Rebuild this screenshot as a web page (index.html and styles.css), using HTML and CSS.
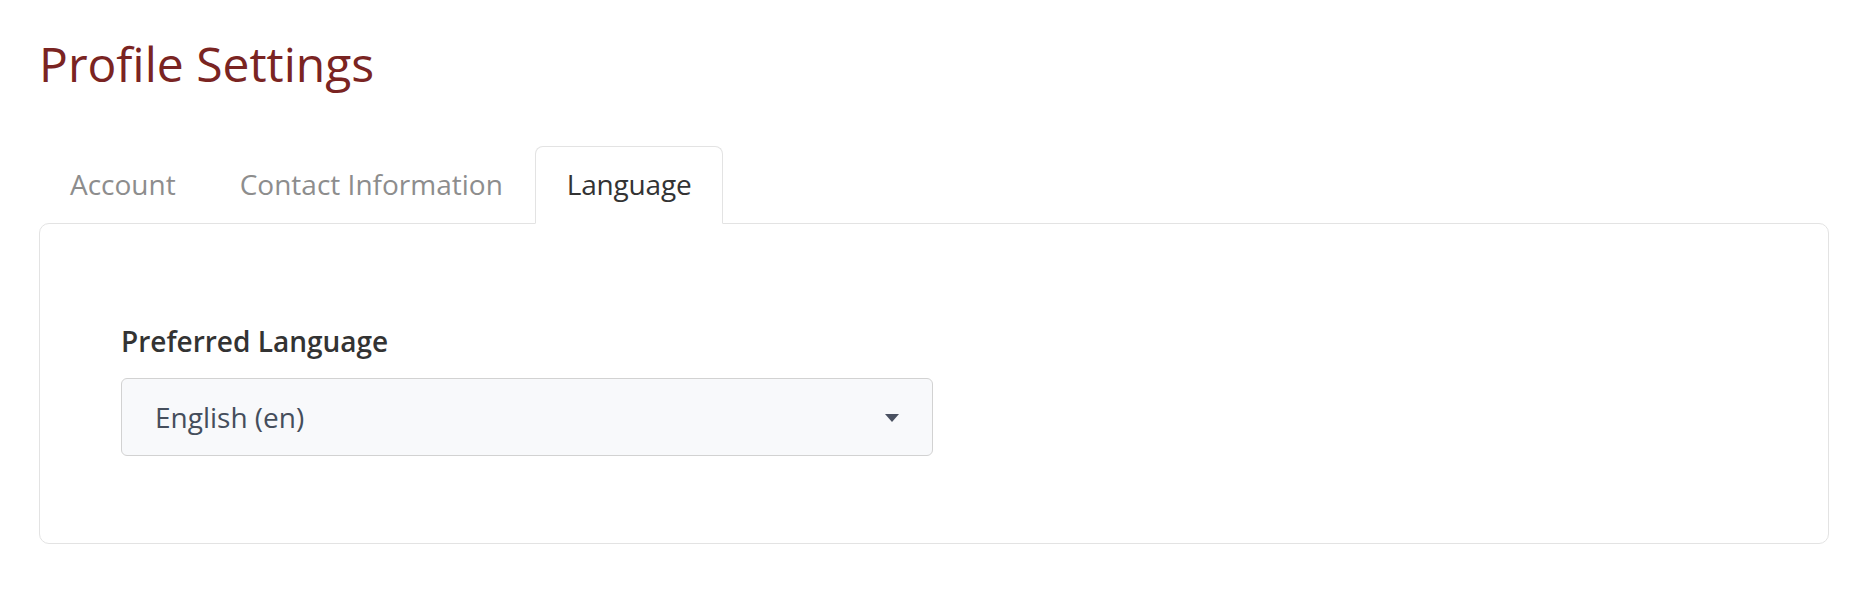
FILE: index.html
```html
<!DOCTYPE html>
<html lang="en">
<head>
<meta charset="utf-8">
<title>Profile Settings</title>
<link rel="stylesheet" href="styles.css">
</head>
<body>
<main class="page">
  <h1 class="title">Profile Settings</h1>
  <nav class="tabs">
    <a class="tab">Account</a>
    <a class="tab">Contact Information</a>
    <a class="tab active">Language</a>
  </nav>
  <section class="card">
    <div class="field">
      <label class="label">Preferred Language</label>
      <div class="select">
        <span class="select-value">English (en)</span>
        <svg class="caret" width="14" height="8" viewBox="0 0 14 8"><path d="M0 0H14L7 8Z" fill="#4a5161"/></svg>
      </div>
    </div>
  </section>
</main>
</body>
</html>
```

FILE: styles.css
```css
html, body {
  margin: 0;
  padding: 0;
  background: #ffffff;
}

body {
  font-family: "Open Sans", "Noto Sans", sans-serif;
  color: #333333;
}

.page {
  padding: 35px 47px 0 39px;
}

.title {
  margin: 0 0 53px 0;
  font-size: 48px;
  line-height: 1.2;
  font-weight: 400;
  color: #7a2422;
}

.tabs {
  display: flex;
  gap: 0;
  margin-left: -1px;
}

.tab {
  display: block;
  padding: 16px 31px 18px;
  font-size: 28px;
  line-height: 42px;
  color: #8d8d8d;
  border: 1px solid transparent;
  border-radius: 8px 8px 0 0;
  margin-bottom: -1px;
  position: relative;
  z-index: 1;
}

.tab.active {
  color: #333333;
  background: #ffffff;
  border-color: #e3e3e3;
  border-bottom-color: #ffffff;
  letter-spacing: -0.2px;
}

.card {
  border: 1px solid #e3e3e3;
  border-radius: 10px;
  padding: 96px 81px 87px;
}

.field {
  display: flex;
  flex-direction: column;
  gap: 16px;
}

.label {
  font-size: 28px;
  line-height: 42px;
  font-weight: 600;
  color: #333333;
}

.select {
  width: 812px;
  box-sizing: border-box;
  height: 78px;
  display: flex;
  align-items: center;
  justify-content: space-between;
  padding: 0 33px 0 33px;
  background: #f8f9fb;
  border: 1px solid #d2d2d2;
  border-radius: 6px;
}

.select-value {
  font-size: 28px;
  line-height: 42px;
  color: #454e5c;
}

.caret {
  display: block;
  margin-top: 2px;
}
```
